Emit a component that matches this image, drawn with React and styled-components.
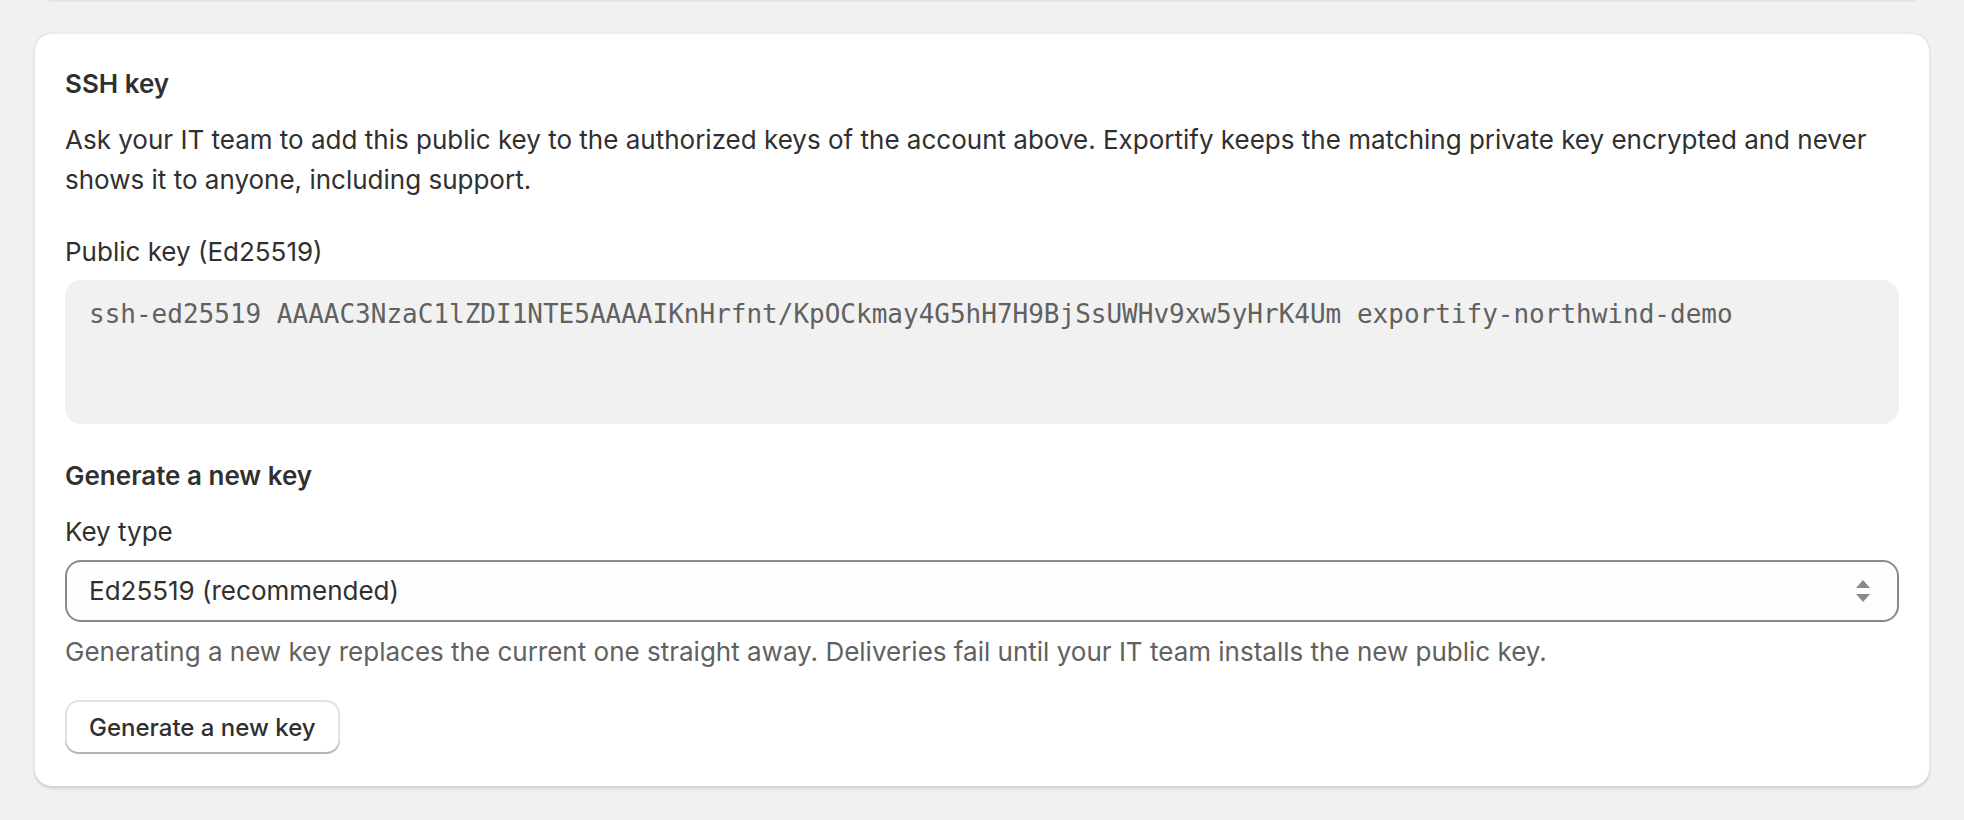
import React from "react";
import styled, { createGlobalStyle } from "styled-components";

const GlobalStyle = createGlobalStyle`
  html, body {
    margin: 0;
    padding: 0;
    background: #f1f1f1;
  }
  body {
    font-family: Inter, "Noto Sans", "Liberation Sans", sans-serif;
    color: #303030;
    -webkit-font-smoothing: antialiased;
  }
  * {
    box-sizing: border-box;
  }
`;

const Page = styled.div`
  width: 1964px;
  height: 820px;
  padding: 0 33px;
  overflow: hidden;
`;

const PrevCardEdge = styled.div`
  height: 2px;
  margin: 0 14px;
  background: #e4e4e4;
  border-radius: 0 0 4px 4px;
`;

const Card = styled.section`
  margin-top: 30px;
  background: #ffffff;
  border-radius: 20px;
  padding: 32px 32px 34px;
  box-shadow: 0 2px 1px rgba(0, 0, 0, 0.06), inset 0 -2px 0 #d6d6d6,
    inset 2px 0 0 #e6e6e6, inset -2px 0 0 #e6e6e6, inset 0 2px 0 #ececec;
`;

const Heading = styled.h2`
  margin: ${(p) => p.$top || 0}px 0 0;
  font-size: 26px;
  line-height: 40px;
  font-weight: 600;
  color: #303030;
`;

const Text = styled.p`
  margin: ${(p) => p.$top || 0}px 0 0;
  font-size: 26px;
  line-height: 40px;
  color: ${(p) => (p.$muted ? "#616161" : "#303030")};
`;

const Label = styled.label`
  display: block;
  margin-top: ${(p) => p.$top || 0}px;
  font-size: 26px;
  line-height: 40px;
  color: #303030;
`;

const KeyBox = styled.div`
  margin-top: 8px;
  min-height: 144px;
  padding: 16px 24px;
  background: #f1f1f1;
  border-radius: 16px;
  font-family: "DejaVu Sans Mono", "Liberation Mono", monospace;
  font-size: 26px;
  line-height: 36px;
  color: #616161;
  white-space: pre-wrap;
  word-break: break-all;
`;

const SelectBox = styled.div`
  margin-top: 8px;
  height: 62px;
  display: flex;
  align-items: center;
  background: #fdfdfd;
  border: 2px solid #8a8a8a;
  border-radius: 16px;
  padding: 0 26px 0 22px;
`;

const Select = styled.select`
  flex: 1;
  appearance: none;
  border: none;
  background: transparent;
  outline: none;
  padding: 0;
  font-family: inherit;
  font-size: 26px;
  line-height: 40px;
  color: #303030;
`;

const Button = styled.button`
  display: block;
  margin-top: 28px;
  height: 54px;
  padding: 0 24px;
  background: #ffffff;
  border: none;
  border-radius: 14px;
  font-family: inherit;
  font-size: 24px;
  font-weight: 500;
  color: #303030;
  box-shadow: inset 0 -2px 0 #b5b5b5, inset 0 0 0 2px #e3e3e3;
  cursor: pointer;
`;

const ChevronUpDown = () => (
  <svg width="16" height="24" viewBox="0 0 16 24" aria-hidden="true">
    <path d="M8 1 L15 9 H1 Z" fill="#8a8a8a" />
    <path d="M8 23 L15 15 H1 Z" fill="#8a8a8a" />
  </svg>
);

const publicKey =
  "ssh-ed25519 AAAAC3NzaC1lZDI1NTE5AAAAIKnHrfnt/KpOCkmay4G5hH7H9BjSsUWHv9xw5yHrK4Um exportify-northwind-demo";

export default function App() {
  return (
    <>
      <GlobalStyle />
      <Page>
        <PrevCardEdge />
        <Card>
          <Heading>SSH key</Heading>
          <Text $top={16}>
            Ask your IT team to add this public key to the authorized keys of the account above.
            Exportify keeps the matching private key encrypted and never shows it to anyone,
            including support.
          </Text>
          <Label $top={32}>Public key (Ed25519)</Label>
          <KeyBox>{publicKey}</KeyBox>
          <Heading $top={32}>Generate a new key</Heading>
          <Label $top={16}>Key type</Label>
          <SelectBox>
            <Select defaultValue="ed25519">
              <option value="ed25519">Ed25519 (recommended)</option>
              <option value="rsa">RSA 4096</option>
            </Select>
            <ChevronUpDown />
          </SelectBox>
          <Text $muted $top={10}>
            Generating a new key replaces the current one straight away. Deliveries fail until your
            IT team installs the new public key.
          </Text>
          <Button>Generate a new key</Button>
        </Card>
      </Page>
    </>
  );
}
